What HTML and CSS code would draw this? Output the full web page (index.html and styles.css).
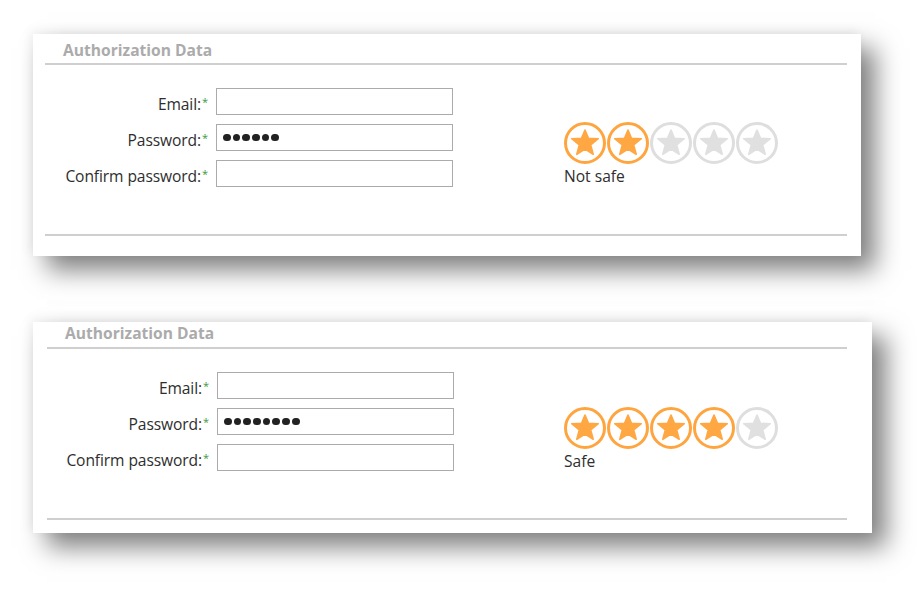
FILE: index.html
```html
<!DOCTYPE html>
<html>
<head>
<meta charset="utf-8">
<link rel="stylesheet" href="styles.css">
</head>
<body>
<div class="page">
  <section class="panel panel-one">
    <h2 class="title">Authorization Data</h2>
    <div class="body">
      <div class="form">
        <label class="label">Email:<span class="req">*</span></label>
        <div class="input"></div>
        <label class="label">Password:<span class="req">*</span></label>
        <div class="input"><span class="dots"><i></i><i></i><i></i><i></i><i></i><i></i></span></div>
        <label class="label">Confirm password:<span class="req">*</span></label>
        <div class="input"></div>
      </div>
      <div class="strength">
        <div class="stars">
          <svg class="star on" viewBox="0 0 42 42"><circle cx="21" cy="21" r="19.5"/><polygon points="21,8 24.5,16.3 34.3,16.7 26.7,22.9 29.2,32.3 21,27 12.8,32.3 15.3,22.9 7.7,16.7 17.5,16.3"/></svg>
          <svg class="star on" viewBox="0 0 42 42"><circle cx="21" cy="21" r="19.5"/><polygon points="21,8 24.5,16.3 34.3,16.7 26.7,22.9 29.2,32.3 21,27 12.8,32.3 15.3,22.9 7.7,16.7 17.5,16.3"/></svg>
          <svg class="star off" viewBox="0 0 42 42"><circle cx="21" cy="21" r="19.5"/><polygon points="21,8 24.5,16.3 34.3,16.7 26.7,22.9 29.2,32.3 21,27 12.8,32.3 15.3,22.9 7.7,16.7 17.5,16.3"/></svg>
          <svg class="star off" viewBox="0 0 42 42"><circle cx="21" cy="21" r="19.5"/><polygon points="21,8 24.5,16.3 34.3,16.7 26.7,22.9 29.2,32.3 21,27 12.8,32.3 15.3,22.9 7.7,16.7 17.5,16.3"/></svg>
          <svg class="star off" viewBox="0 0 42 42"><circle cx="21" cy="21" r="19.5"/><polygon points="21,8 24.5,16.3 34.3,16.7 26.7,22.9 29.2,32.3 21,27 12.8,32.3 15.3,22.9 7.7,16.7 17.5,16.3"/></svg>
        </div>
        <div class="verdict">Not safe</div>
      </div>
    </div>
    <div class="rule"></div>
  </section>

  <section class="panel panel-two">
    <h2 class="title">Authorization Data</h2>
    <div class="body">
      <div class="form">
        <label class="label">Email:<span class="req">*</span></label>
        <div class="input"></div>
        <label class="label">Password:<span class="req">*</span></label>
        <div class="input"><span class="dots"><i></i><i></i><i></i><i></i><i></i><i></i><i></i><i></i></span></div>
        <label class="label">Confirm password:<span class="req">*</span></label>
        <div class="input"></div>
      </div>
      <div class="strength">
        <div class="stars">
          <svg class="star on" viewBox="0 0 42 42"><circle cx="21" cy="21" r="19.5"/><polygon points="21,8 24.5,16.3 34.3,16.7 26.7,22.9 29.2,32.3 21,27 12.8,32.3 15.3,22.9 7.7,16.7 17.5,16.3"/></svg>
          <svg class="star on" viewBox="0 0 42 42"><circle cx="21" cy="21" r="19.5"/><polygon points="21,8 24.5,16.3 34.3,16.7 26.7,22.9 29.2,32.3 21,27 12.8,32.3 15.3,22.9 7.7,16.7 17.5,16.3"/></svg>
          <svg class="star on" viewBox="0 0 42 42"><circle cx="21" cy="21" r="19.5"/><polygon points="21,8 24.5,16.3 34.3,16.7 26.7,22.9 29.2,32.3 21,27 12.8,32.3 15.3,22.9 7.7,16.7 17.5,16.3"/></svg>
          <svg class="star on" viewBox="0 0 42 42"><circle cx="21" cy="21" r="19.5"/><polygon points="21,8 24.5,16.3 34.3,16.7 26.7,22.9 29.2,32.3 21,27 12.8,32.3 15.3,22.9 7.7,16.7 17.5,16.3"/></svg>
          <svg class="star off" viewBox="0 0 42 42"><circle cx="21" cy="21" r="19.5"/><polygon points="21,8 24.5,16.3 34.3,16.7 26.7,22.9 29.2,32.3 21,27 12.8,32.3 15.3,22.9 7.7,16.7 17.5,16.3"/></svg>
        </div>
        <div class="verdict">Safe</div>
      </div>
    </div>
    <div class="rule"></div>
  </section>
</div>
</body>
</html>
```

FILE: styles.css
```css
html, body {
  margin: 0;
  padding: 0;
  background: #ffffff;
}

body {
  width: 917px;
  height: 591px;
  overflow: hidden;
  font-family: "Open Sans", "Noto Sans", "Liberation Sans", sans-serif;
  color: #333333;
}

.page {
  display: flex;
  flex-direction: column;
  align-items: flex-start;
  padding: 34px 0 0 33px;
  gap: 66px;
}

.panel {
  background: #ffffff;
  box-sizing: border-box;
  box-shadow: 14px 14px 24px rgba(0, 0, 0, 0.5), -3px -3px 10px rgba(0, 0, 0, 0.06);
  display: flex;
  flex-direction: column;
}

.panel-one {
  width: 828px;
  height: 222px;
  padding: 4px 14px 0 12px;
}

.panel-one .title {
  line-height: 24px;
  height: 24px;
  padding-bottom: 1px;
}

.panel-two {
  width: 839px;
  height: 211px;
  padding: 0 25px 0 14px;
}

.title {
  margin: 0;
  padding: 0 0 3px 18px;
  height: 22px;
  line-height: 22px;
  font-size: 15.6px;
  font-weight: 700;
  color: #ababab;
  border-bottom: 2px solid #cfcfcf;
}

.body {
  display: flex;
  align-items: flex-start;
  margin-top: 23px;
  height: 99px;
}

.form {
  display: grid;
  grid-template-columns: 163px 237px;
  grid-auto-rows: 27px;
  column-gap: 8px;
  row-gap: 9px;
}

.panel-two .form {
  grid-template-columns: 162px 237px;
}

.label {
  text-align: right;
  font-size: 15.6px;
  line-height: 27px;
  color: #2e2e2e;
  white-space: nowrap;
  letter-spacing: -0.1px;
}

.req {
  color: #3c9a3c;
  font-size: 11px;
  vertical-align: 4px;
  margin-left: 1px;
}

.input {
  box-sizing: border-box;
  border: 1px solid #ababab;
  background: #ffffff;
  display: flex;
  align-items: center;
  padding-left: 6px;
}

.dots {
  display: flex;
  gap: 2px;
}

.dots i {
  display: block;
  width: 7.7px;
  height: 7.7px;
  border-radius: 50%;
  background: #222222;
}

.strength {
  margin-left: 111px;
  margin-top: 34px;
  display: flex;
  flex-direction: column;
}

.panel-two .strength {
  margin-top: 35px;
  margin-left: 110px;
}

.stars {
  display: flex;
  gap: 1px;
}

.star {
  width: 42px;
  height: 42px;
  display: block;
}

.star circle {
  fill: #ffffff;
  stroke-width: 3;
}

.star polygon {
  stroke-width: 1.6;
  stroke-linejoin: round;
}

.star.on circle {
  stroke: #ffa53f;
}

.star.on polygon {
  fill: #ffa843;
  stroke: #ffa843;
}

.star.off circle {
  stroke: #dedede;
}

.star.off polygon {
  fill: #e0e0e0;
  stroke: #e0e0e0;
}

.verdict {
  font-size: 15.6px;
  line-height: 22px;
  margin-top: 1px;
  color: #2e2e2e;
}

.rule {
  margin-top: 47px;
  height: 2px;
  background: #cfcfcf;
}
```
